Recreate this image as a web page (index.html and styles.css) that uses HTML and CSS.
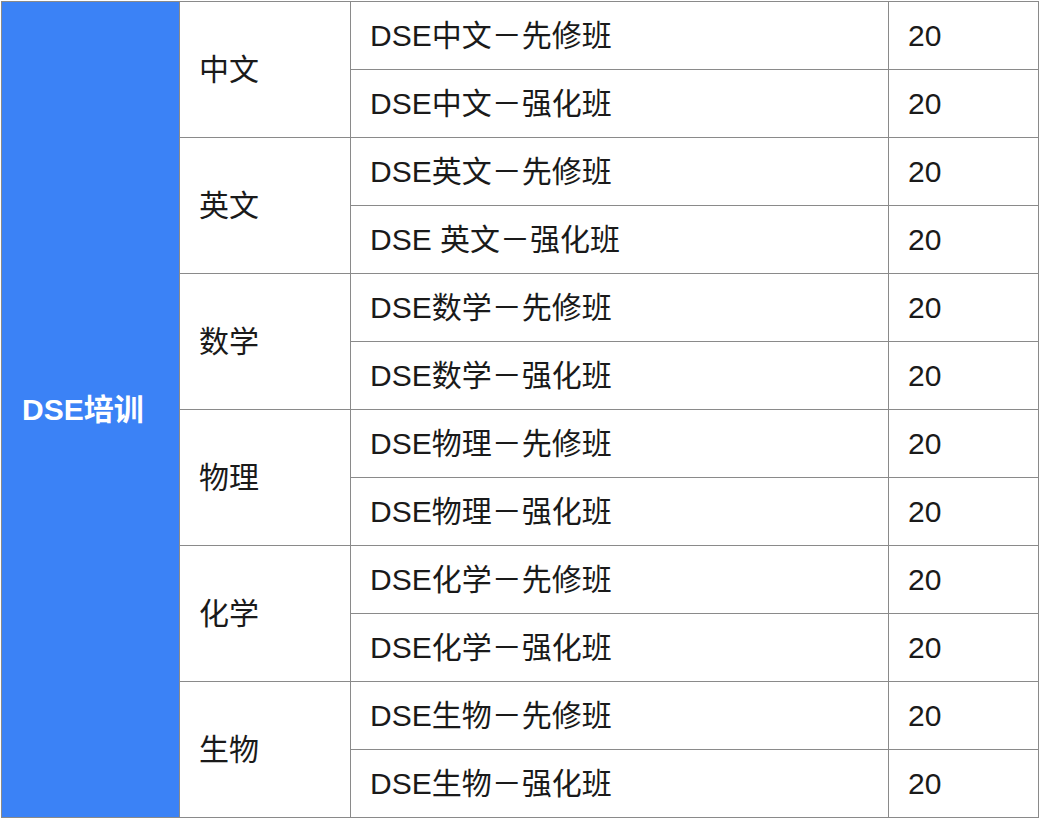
FILE: index.html
```html
<!DOCTYPE html>
<html lang="zh-CN">
<head>
<meta charset="utf-8">
<title>DSE培训</title>
<link rel="stylesheet" href="styles.css">
</head>
<body>
<table class="course-table">
  <colgroup>
    <col class="c1"><col class="c2"><col class="c3"><col class="c4">
  </colgroup>
  <tbody>
    <tr>
      <td class="cat" rowspan="12">DSE培训</td>
      <td class="subj" rowspan="2">中文</td>
      <td>DSE中文－先修班</td>
      <td>20</td>
    </tr>
    <tr><td>DSE中文－强化班</td><td>20</td></tr>
    <tr>
      <td class="subj" rowspan="2">英文</td>
      <td>DSE英文－先修班</td>
      <td>20</td>
    </tr>
    <tr><td>DSE 英文－强化班</td><td>20</td></tr>
    <tr>
      <td class="subj" rowspan="2">数学</td>
      <td>DSE数学－先修班</td>
      <td>20</td>
    </tr>
    <tr><td>DSE数学－强化班</td><td>20</td></tr>
    <tr>
      <td class="subj" rowspan="2">物理</td>
      <td>DSE物理－先修班</td>
      <td>20</td>
    </tr>
    <tr><td>DSE物理－强化班</td><td>20</td></tr>
    <tr>
      <td class="subj" rowspan="2">化学</td>
      <td>DSE化学－先修班</td>
      <td>20</td>
    </tr>
    <tr><td>DSE化学－强化班</td><td>20</td></tr>
    <tr>
      <td class="subj" rowspan="2">生物</td>
      <td>DSE生物－先修班</td>
      <td>20</td>
    </tr>
    <tr><td>DSE生物－强化班</td><td>20</td></tr>
  </tbody>
</table>
</body>
</html>
```
FILE: styles.css
```css
html, body {
  margin: 0;
  padding: 0;
  background: #ffffff;
}

body {
  padding: 1px 0 0 1px;
  font-family: "Liberation Sans", "Noto Sans CJK SC", sans-serif;
  color: #1a1a1a;
}

.course-table {
  border-collapse: collapse;
  table-layout: fixed;
  width: 1038px;
}

.c1 { width: 178px; }
.c2 { width: 171px; }
.c3 { width: 538px; }
.c4 { width: 150px; }

.course-table td {
  border: 1px solid #8a8a8a;
  height: 67px;
  padding: 0 20px 0 19px;
  font-size: 30px;
  line-height: 34px;
  vertical-align: middle;
  text-align: left;
  white-space: nowrap;
}

.course-table td.cat {
  background: #3b82f6;
  color: #ffffff;
  font-weight: 700;
  font-size: 30px;
  padding-left: 20px;
}
```
